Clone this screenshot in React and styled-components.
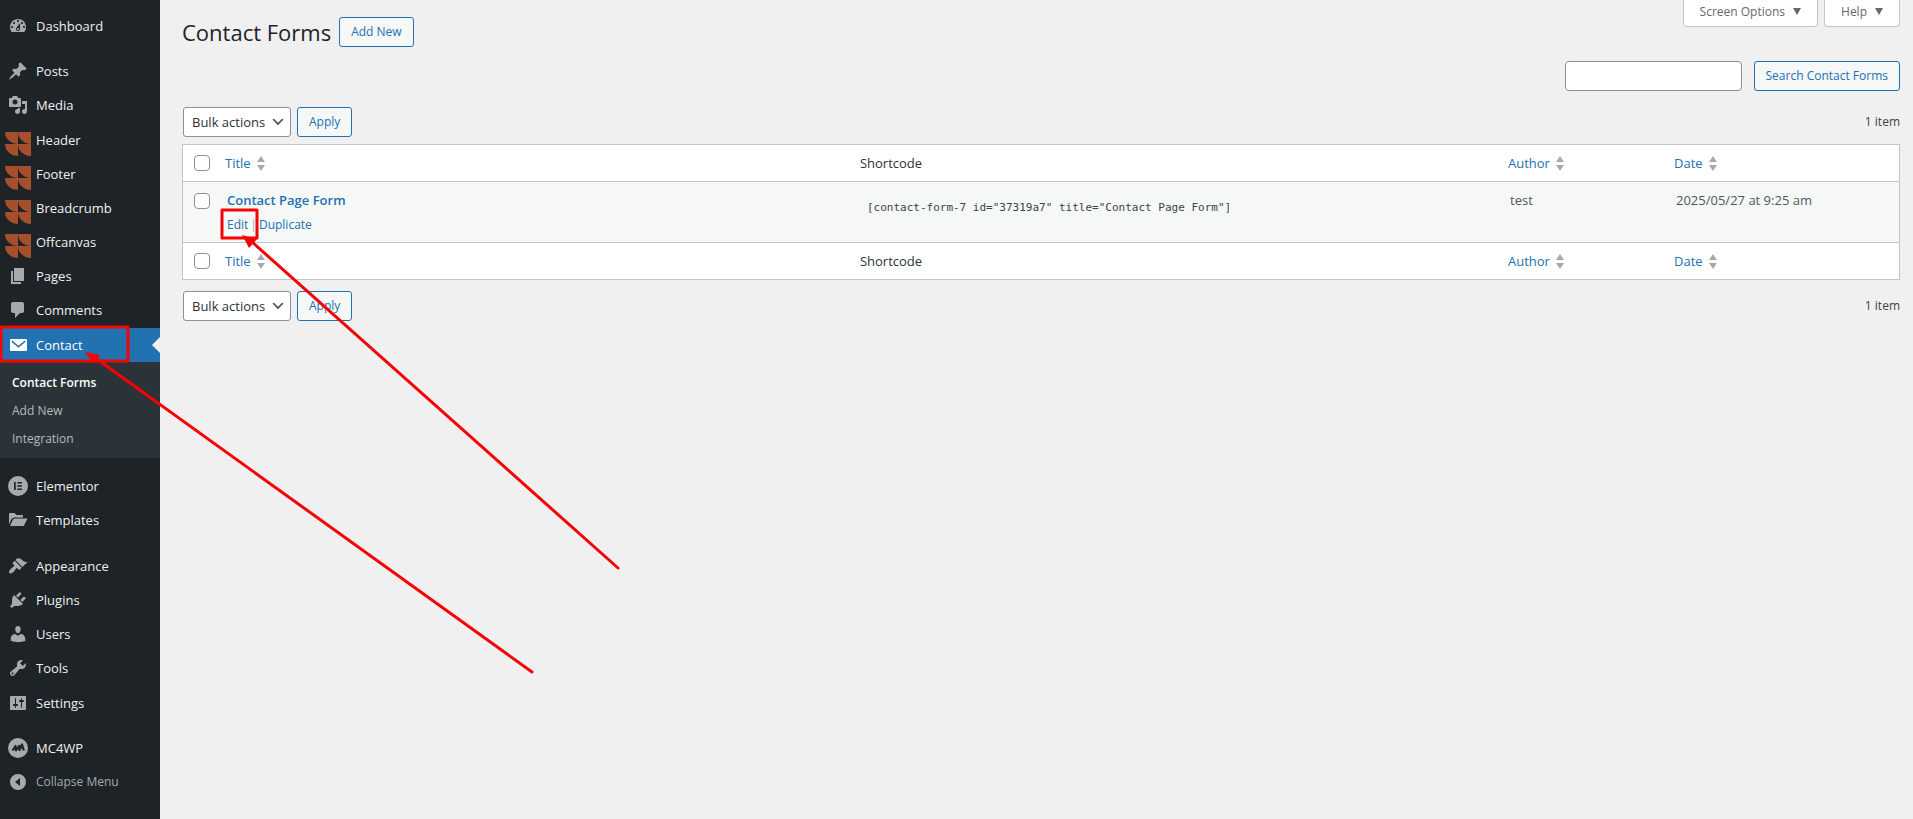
import React from "react";
import styled, { createGlobalStyle, css } from "styled-components";

const paths = {
  dashboard: "M3.76 16h12.48c1.1-1.37 1.76-3.11 1.76-5 0-4.42-3.58-8-8-8s-8 3.58-8 8c0 1.89.66 3.63 1.76 5zM10 4c.55 0 1 .45 1 1s-.45 1-1 1-1-.45-1-1 .45-1 1-1zM6 6c.55 0 1 .45 1 1s-.45 1-1 1-1-.45-1-1 .45-1 1-1zm8 0c.55 0 1 .45 1 1s-.45 1-1 1-1-.45-1-1 .45-1 1-1zm-5.37 5.55L12 7v6c0 1.1-.9 2-2 2s-2-.9-2-2c0-.57.24-1.08.63-1.45zM4 10c.55 0 1 .45 1 1s-.45 1-1 1-1-.45-1-1 .45-1 1-1zm12 0c.55 0 1 .45 1 1s-.45 1-1 1-1-.45-1-1 .45-1 1-1zm-5 3c0-.55-.45-1-1-1s-1 .45-1 1 .45 1 1 1 1-.45 1-1z",
  pin: "M10.44 3.02l1.82-1.82 6.36 6.35-1.83 1.82c-1.05-.68-2.48-.57-3.41.36l-.75.75c-.92.93-1.04 2.35-.35 3.41l-1.83 1.82-2.41-2.41-2.8 2.79c-.42.42-3.38 2.71-3.8 2.29s1.86-3.39 2.28-3.81l2.79-2.79L4.1 9.36l1.83-1.82c1.05.69 2.48.57 3.4-.36l.75-.75c.93-.92 1.05-2.35.36-3.41z",
  media: "M13 11V4c0-.55-.45-1-1-1h-1.67L9 1H5L3.67 3H2c-.55 0-1 .45-1 1v7c0 .55.45 1 1 1h10c.55 0 1-.45 1-1zM7 4.5c1.38 0 2.5 1.12 2.5 2.5S8.38 9.5 7 9.5 4.5 8.38 4.5 7 5.62 4.5 7 4.5zM14 6h5v10.5c0 1.38-1.12 2.5-2.5 2.5S14 17.88 14 16.5s1.12-2.5 2.5-2.5c.17 0 .34.02.5.05V9h-3V6zm-4 8.05V13h2v3.5c0 1.38-1.12 2.5-2.5 2.5S7 17.88 7 16.5 8.12 14 9.5 14c.17 0 .34.02.5.05z",
  pages: "M6 15V2h10v13H6zm-1 1h8v2H3V5h2v11z",
  comments: "M5 2h9c1.1 0 2 .9 2 2v7c0 1.1-.9 2-2 2h-2l-5 5v-5H5c-1.1 0-2-.9-2-2V4c0-1.1.9-2 2-2z",
  mail: "M3 4h15a1 1 0 0 1 1 1v10a1 1 0 0 1-1 1H3a1 1 0 0 1-1-1V5a1 1 0 0 1 1-1zm1.2 1.6L3.4 6.7l7.1 6 7.1-6-.8-1.1-6.3 5.1z",
  elementor: "M10 0a10 10 0 1 0 0 20 10 10 0 0 0 0-20zM6 6h1.7v8H6zm3.3 0H14v1.6H9.3zm0 3.2H14v1.6H9.3zm0 3.2H14V14H9.3z",
  templates: "M1 14.5V4c0-.6.4-1 1-1h4.5l2 2H14c.6 0 1 .4 1 1v1.5H6L3.5 9 1 14.5zM6.5 8.5h13l-3.5 7c-.2.4-.5.5-1 .5H2l3-6.500z",
  appearance: "M14.48 11.06L7.41 3.99l1.5-1.5c.5-.56 2.3-.47 3.51.32 1.21.8 1.43 1.28 2.91 2.1 1.18.64 2.45 1.26 4.45.85zm-.71.71L6.7 4.7 4.93 6.47c-.39.39-.39 1.02 0 1.41l1.06 1.06c.39.39.39 1.03 0 1.42-.6.6-1.43 1.11-2.21 1.69-.35.26-.7.53-1.01.84C1.43 14.23.4 16.08 1.4 17.07c.99 1 2.84-.03 4.18-1.36.31-.31.58-.66.85-1.02.57-.78 1.08-1.61 1.69-2.21.39-.39 1.02-.39 1.41 0l1.06 1.06c.39.39 1.02.39 1.41 0z",
  plugins: "M13.11 4.36L9.87 7.6 8 5.73l3.24-3.24c.35-.34 1.05-.2 1.56.32.52.51.66 1.21.31 1.55zm-8 1.77l.91-1.12 9.01 9.01-1.19.84c-.71.71-2.63 1.16-3.82 1.16H6.14L4.9 17.26c-.59.59-1.54.59-2.12 0-.59-.58-.59-1.53 0-2.12l1.24-1.24v-3.88c0-1.13.4-3.19 1.09-3.89zm7.26 3.97l3.24-3.24c.34-.35 1.04-.21 1.55.31.52.51.66 1.21.31 1.55l-3.24 3.25z",
  users: "M10 9.25c-2.27 0-2.73-3.44-2.73-3.44C7 4.02 7.82 2 9.97 2c2.16 0 2.98 2.02 2.71 3.81 0 0-.41 3.44-2.68 3.44zm0 2.57L12.72 10c2.39 0 4.52 2.33 4.52 4.53v2.49s-3.65 1.13-7.24 1.13c-3.65 0-7.24-1.13-7.24-1.13v-2.49c0-2.25 1.94-4.48 4.47-4.48z",
  tools: "M16.68 9.77c-1.34 1.34-3.3 1.67-4.95.99l-5.41 6.52c-.99.99-2.59.99-3.58 0s-.99-2.59 0-3.57l6.52-5.42c-.68-1.65-.35-3.61.99-4.95 1.28-1.28 3.12-1.62 4.72-1.06l-2.89 2.89 2.82 2.82 2.86-2.87c.53 1.58.18 3.39-1.08 4.65zM3.81 16.21c.4.39 1.04.39 1.43 0 .4-.4.4-1.04 0-1.43-.39-.4-1.03-.4-1.43 0-.39.39-.39 1.03 0 1.43z",
  settings: "M18 16V4c0-.55-.45-1-1-1H3c-.55 0-1 .45-1 1v12c0 .55.45 1 1 1h14c.55 0 1-.45 1-1zM8 11h1c.55 0 1 .45 1 1s-.45 1-1 1H8v1.5c0 .28-.22.5-.5.5s-.5-.22-.5-.5V13H6c-.55 0-1-.45-1-1s.45-1 1-1h1V5.5c0-.28.22-.5.5-.5s.5.22.5.5V11zm5-2h-1c-.55 0-1-.45-1-1s.45-1 1-1h1V5.5c0-.28.22-.5.5-.5s.5.22.5.5V7h1c.55 0 1 .45 1 1s-.45 1-1 1h-1v5.5c0 .28-.22.5-.5.5s-.5-.22-.5-.5V9z",
  collapse: "M10 2a8 8 0 1 0 0 16 8 8 0 0 0 0-16zm2 4v8l-5-4z",
};

const groups = [
  { space: 9, items: [["Dashboard", "dashboard"]] },
  { space: 11, items: [["Posts", "pin"], ["Media", "media"]] },
  { space: 1, items: [["Header", "theme"], ["Footer", "theme"], ["Breadcrumb", "theme"], ["Offcanvas", "theme"]] },
  { space: 0, items: [["Pages", "pages"], ["Comments", "comments"]] },
  { space: 1, items: [["Contact", "mail"]], submenu: ["Contact Forms", "Add New", "Integration"] },
  { space: 11, items: [["Elementor", "elementor"], ["Templates", "templates"]] },
  { space: 12, items: [["Appearance", "appearance"], ["Plugins", "plugins"], ["Users", "users"], ["Tools", "tools"]] },
  { space: 1, items: [["Settings", "settings"]] },
  { space: 11, items: [["MC4WP", "mc4wp"]] },
];

function Icon({ name }) {
  if (name === "theme") {
    return (
      <ThemeLogo viewBox="0 0 26 24">
        <path d="M0 0h13v12A13 12 0 0 1 0 0zM13 0h13v12A13 12 0 0 1 13 0zM0 12h13v12A13 12 0 0 1 0 12zM13 12h13v12A13 12 0 0 1 13 12z" />
      </ThemeLogo>
    );
  }
  if (name === "mc4wp") {
    return (
      <MenuIcon viewBox="0 0 20 20">
        <circle cx="10" cy="10" r="10" />
        <path d="M4.5 12.5L7.500 8l.5 4.500L11 8l.5 4L14 6.500l1.800 6" fill="none" stroke="#1d2327" strokeWidth="2.2" strokeLinejoin="round" />
      </MenuIcon>
    );
  }
  return (
    <MenuIcon viewBox="0 0 20 20">
      <path d={paths[name]} fillRule="evenodd" />
    </MenuIcon>
  );
}

function Sidebar() {
  return (
    <SideNav>
      {groups.map((group) => (
        <MenuGroup key={group.items[0][0]} $space={group.space}>
          {group.items.map(([label, icon]) => (
            <li key={label}>
              <MenuLink href="#" $active={!!group.submenu}>
                <Icon name={icon} />
                {label}
              </MenuLink>
            </li>
          ))}
          {group.submenu && (
            <li>
              <Submenu>
                {group.submenu.map((label, i) => (
                  <li key={label}>
                    <SubmenuLink href="#" $current={i === 0}>{label}</SubmenuLink>
                  </li>
                ))}
              </Submenu>
            </li>
          )}
        </MenuGroup>
      ))}
      <CollapseButton type="button">
        <Icon name="collapse" />
        Collapse Menu
      </CollapseButton>
    </SideNav>
  );
}

function BulkBar({ bottom }) {
  return (
    <TableNav $bottom={bottom}>
      <BulkActions>
        <SelectWrap>
          <Select aria-label="Select bulk action">
            <option>Bulk actions</option>
          </Select>
          <Chevron viewBox="0 0 20 20">
            <path d="M5 6l5 5 5-5 2 1-7 7-7-7 2-1z" />
          </Chevron>
        </SelectWrap>
        <Button type="button">Apply</Button>
      </BulkActions>
      <span>1 item</span>
    </TableNav>
  );
}

function SortLink({ children }) {
  return (
    <SortAnchor href="#">
      {children}
      <SortArrows viewBox="0 0 8 15">
        <path d="M4 0l4 6H0zM4 15l4-6H0z" />
      </SortArrows>
    </SortAnchor>
  );
}

function HeadingRow({ label }) {
  return (
    <tr>
      <HeadCell><Checkbox aria-label={label} /></HeadCell>
      <HeadCell><SortLink>Title</SortLink></HeadCell>
      <HeadCell>Shortcode</HeadCell>
      <HeadCell><SortLink>Author</SortLink></HeadCell>
      <HeadCell><SortLink>Date</SortLink></HeadCell>
    </tr>
  );
}

export default function App() {
  return (
    <Page>
      <GlobalStyle />
      <Sidebar />
      <Content>
        <TopBar>
          <Heading>
            <h1>Contact Forms</h1>
            <Button as="a" href="#">Add New</Button>
          </Heading>
          <ScreenMeta>
            <MetaTab type="button">Screen Options<Caret viewBox="0 0 8 7"><path d="M0 0h8L4 7z" /></Caret></MetaTab>
            <MetaTab type="button">Help<Caret viewBox="0 0 8 7"><path d="M0 0h8L4 7z" /></Caret></MetaTab>
          </ScreenMeta>
        </TopBar>
        <SearchForm>
          <SearchInput type="text" aria-label="Search Contact Forms" />
          <Button type="button">Search Contact Forms</Button>
        </SearchForm>
        <BulkBar />
        <Table>
          <colgroup>
            <Col $width="34px" />
            <Col $width="37%" />
            <Col />
            <Col $width="166px" />
            <Col $width="233px" />
          </colgroup>
          <thead><HeadingRow label="Select all" /></thead>
          <tbody>
            <tr>
              <Cell><Checkbox aria-label="Select Contact Page Form" /></Cell>
              <Cell>
                <RowTitle href="#">Contact Page Form</RowTitle>
                <RowActions>
                  <a href="#">Edit</a>
                  <span>|</span>
                  <a href="#">Duplicate</a>
                </RowActions>
              </Cell>
              <Cell>
                <Shortcode aria-label="Shortcode" readOnly value={'[contact-form-7 id="37319a7" title="Contact Page Form"]'} />
              </Cell>
              <Cell>test</Cell>
              <Cell>2025/05/27 at 9:25 am</Cell>
            </tr>
          </tbody>
          <tfoot><HeadingRow label="Select all, bottom" /></tfoot>
        </Table>
        <BulkBar bottom />
      </Content>
      <Annotations>
        <rect x="1" y="327" width="127" height="34" />
        <rect x="222" y="210" width="35" height="28" />
        <path d="M532 672L94 357M618 568L252 242" />
        <polygon points="85,352 100,355 93,364" />
        <polygon points="242,235 257,239 249,248" />
      </Annotations>
    </Page>
  );
}

const GlobalStyle = createGlobalStyle`
  * {
    box-sizing: border-box;
  }
  body {
    margin: 0;
    background: #f0f0f1;
    color: #3c434a;
    font: 13px/20px "Open Sans", "Noto Sans", sans-serif;
  }
  a {
    color: #2271b1;
    text-decoration: none;
  }
`

const Page = styled.div`
  position: relative;
  display: flex;
  min-height: 100vh;
`

const SideNav = styled.nav`
  flex: 0 0 160px;
  background: #1d2327;
`

const MenuGroup = styled.ul`
  list-style: none;
  margin: 0;
  padding: ${(p) => p.$space}px 0 0;
`

const menuRow = css`
  display: flex;
  align-items: center;
  gap: 8px;
  width: 100%;
  height: 34px;
  padding: 0 8px;
  color: #f0f0f1;
  fill: #a7aaad;
`

const MenuLink = styled.a`
  ${menuRow}
  ${(p) => p.$active && css`
    position: relative;
    background: #2271b1;
    color: #fff;
    fill: #fff;
    &:after {
      content: "";
      position: absolute;
      right: 0;
      border: 8px solid transparent;
      border-right-color: #f0f0f1;
      border-left: 0;
    }
  `}
`

const CollapseButton = styled.button`
  ${menuRow}
  border: 0;
  background: none;
  color: #a7aaad;
  font: inherit;
  font-size: 12px;
`

const MenuIcon = styled.svg`
  flex: none;
  width: 20px;
  height: 20px;
`

const ThemeLogo = styled.svg`
  flex: none;
  width: 26px;
  height: 24px;
  margin: 8px -3px 0;
  fill: #a54f2d;
`

const Submenu = styled.ul`
  list-style: none;
  margin: 0;
  padding: 7px 0 5px;
  background: #2c3338;
`

const SubmenuLink = styled.a`
  display: block;
  padding: 4px 12px;
  font-size: 12px;
  color: ${(p) => (p.$current ? "#fff" : "#b4b9be")};
  font-weight: ${(p) => (p.$current ? 600 : 400)};
`

const Content = styled.main`
  flex: 1;
  min-width: 0;
  padding: 0 13px 0 22px;
`

const TopBar = styled.header`
  display: flex;
  justify-content: space-between;
  align-items: flex-start;
  height: 61px;
`

const Heading = styled.div`
  display: flex;
  align-items: center;
  gap: 8px;
  padding-top: 17px;
  h1 {
    margin: 0;
    color: #1d2327;
    font-size: 22px;
    font-weight: 400;
    line-height: 30px;
  }
`

const ScreenMeta = styled.div`
  display: flex;
  gap: 6px;
`

const MetaTab = styled.button`
  display: flex;
  align-items: center;
  gap: 8px;
  height: 27px;
  padding: 0 16px 3px;
  border: 1px solid #c3c4c7;
  border-top: 0;
  border-radius: 0 0 4px 4px;
  background: #fff;
  color: #646970;
  font: inherit;
  font-size: 12px;
`

const Caret = styled.svg`
  width: 8px;
  height: 7px;
  fill: #646970;
`

const Button = styled.button`
  height: 30px;
  padding: 0 11px;
  border: 1px solid #2271b1;
  border-radius: 3px;
  background: #f6f7f7;
  color: #2271b1;
  font: inherit;
  font-size: 12px;
  line-height: 28px;
`

const SearchForm = styled.form`
  display: flex;
  justify-content: flex-end;
  gap: 12px;
`

const SearchInput = styled.input`
  width: 177px;
  height: 30px;
  border: 1px solid #8c8f94;
  border-radius: 4px;
  background: #fff;
`

const TableNav = styled.div`
  display: flex;
  justify-content: space-between;
  align-items: center;
  padding: ${(p) => (p.$bottom ? 11 : 16)}px 0 7px 1px;
  font-size: 12px;
`

const BulkActions = styled.div`
  display: flex;
  gap: 6px;
`

const SelectWrap = styled.div`
  position: relative;
`

const Select = styled.select`
  appearance: none;
  width: 108px;
  height: 30px;
  padding: 0 24px 0 8px;
  border: 1px solid #8c8f94;
  border-radius: 3px;
  background: #fff;
  color: #2c3338;
  font: inherit;
  font-size: 13px;
`

const Chevron = styled.svg`
  position: absolute;
  top: 7px;
  right: 5px;
  width: 16px;
  height: 16px;
  fill: #555;
  pointer-events: none;
`

const Table = styled.table`
  width: 100%;
  table-layout: fixed;
  border: 1px solid #c3c4c7;
  border-spacing: 0;
  background: #fff;
  tbody td {
    border: solid #c3c4c7;
    border-width: 1px 0;
  }
`

const Col = styled.col`
  width: ${(p) => p.$width || "auto"};
`

const HeadCell = styled.th`
  height: 36px;
  padding: 0 8px;
  color: #2c3338;
  font-weight: 400;
  text-align: left;
  &:first-child {
    padding: 0 0 0 11px;
  }
`

const Cell = styled.td`
  height: 62px;
  padding: 8px 10px 6px;
  background: #f6f7f7;
  color: #50575e;
  vertical-align: top;
  &:first-child {
    padding: 11px 0 0 11px;
  }
`

const Checkbox = styled.input.attrs({ type: "checkbox" })`
  appearance: none;
  display: block;
  width: 16px;
  height: 16px;
  margin: 0;
  border: 1px solid #8c8f94;
  border-radius: 4px;
  background: #fff;
`

const SortAnchor = styled.a`
  display: flex;
  align-items: center;
  gap: 6px;
`

const SortArrows = styled.svg`
  width: 8px;
  height: 15px;
  fill: #a7aaad;
`

const RowTitle = styled.a`
  font-weight: 600;
`

const RowActions = styled.div`
  display: flex;
  gap: 2px;
  padding-top: 5px;
  color: #a7aaad;
  font-size: 12px;
`

const Shortcode = styled.input`
  display: block;
  width: 100%;
  height: 34px;
  padding: 0 5px;
  border: 0;
  background: transparent;
  color: #3c434a;
  font: 11px "DejaVu Sans Mono", monospace;
`

const Annotations = styled.svg`
  position: absolute;
  top: 0;
  left: 0;
  width: 100%;
  height: 100%;
  overflow: visible;
  pointer-events: none;
  rect, path {
    fill: none;
    stroke: #f40404;
    stroke-width: 3px;
    stroke-linejoin: round;
    stroke-linecap: round;
  }
  polygon {
    fill: #f40404;
  }
`
